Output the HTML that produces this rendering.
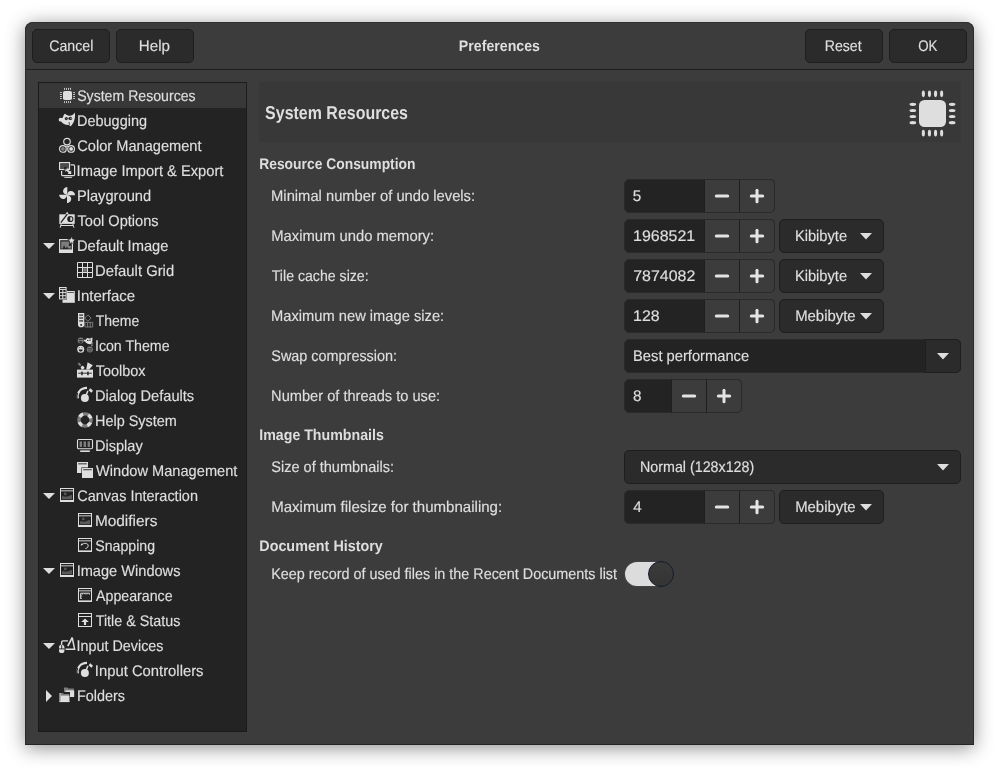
<!DOCTYPE html>
<html lang='en'><head><meta charset='utf-8'><title>Preferences</title>
<style>
html,body{margin:0;padding:0;background:#fff;}
body{width:999px;height:773px;position:relative;overflow:hidden;font-family:"Liberation Sans", sans-serif;color:#dedede;text-rendering:geometricPrecision;}
#root{position:absolute;left:0;top:0;width:999px;height:773px;will-change:transform;}
div,header,nav,main,section,ul,li,h1,h2,label,span,svg{position:absolute;box-sizing:border-box;margin:0;padding:0;}
ul{list-style:none;}
.t{white-space:nowrap;line-height:30px;height:30px;transform-origin:0 0;font-size:15.4px;font-weight:normal;-webkit-text-stroke:0.18px #dedede;}
.t.b{font-weight:bold;-webkit-text-stroke:0;}
.btn{background:#2b2b2b;border:1px solid #1e1e1e;border-radius:5px;}
.ent{background:#232323;border:1px solid #2a2a2a;border-radius:5px;}
.sb{background:#3c3c3c;border:1px solid #2a2a2a;border-left-color:#1f1f1f;width:36px;height:34px;top:0;}
.sb.last{border-radius:0 5px 5px 0;}
svg{overflow:visible}
#win{left:25px;top:22px;width:949px;height:723px;background:#3c3c3c;border-radius:8px 8px 0 0;box-shadow:0 3px 19px 0 rgba(0,0,0,0.44);}
#frame{left:0;top:0;width:949px;height:723px;border:1px solid #2b2b2b;border-top-color:#303030;border-bottom-color:#242424;border-radius:8px 8px 0 0;pointer-events:none;}
#side{left:13px;top:60px;width:209px;height:650px;background:#232323;border:1px solid #1b1b1b;}
#side li{left:0;width:207px;height:25px;}
#side li.sel{background:#383838;}
</style></head><body><div id='root'>
<div id='win'>
<header style='left:0;top:0;width:949px;height:48px;border-bottom:1px solid #1f1f1f;'>
<div class='btn' style='left:7px;top:7px;width:78px;height:34px'><span class='t' style='left:16px;top:2px;transform:translateX(0.23px) scaleX(0.9202);'>Cancel</span></div>
<div class='btn' style='left:91px;top:7px;width:78px;height:34px'><span class='t' style='left:21px;top:2px;transform:translateX(0.86px) scaleX(0.9836);'>Help</span></div>
<div class='btn' style='left:780px;top:7px;width:78px;height:34px'><span class='t' style='left:18px;top:2px;transform:translateX(0.70px) scaleX(0.9167);'>Reset</span></div>
<div class='btn' style='left:864px;top:7px;width:78px;height:34px'><span class='t' style='left:28px;top:2px;transform:translateX(0.21px) scaleX(0.8656);'>OK</span></div>
<h1 class='t b' style='left:433px;top:10px;transform:translateX(0.85px) scaleX(0.9199);'>Preferences</h1>
</header>
<nav id='side'><ul style='left:0;top:0;width:207px;height:648px'>
<li class='sel' style='top:0px'><svg style='left:20px;top:4px' width='17' height='17' viewBox='0 0 17 17'><g transform='translate(0.5 0.5) scale(0.33333)'><rect x="10.5" y="10.5" width="27" height="27" rx="5.5" fill="#dedede"/><ellipse cx="14.85" cy="4.35" rx="1.55" ry="3.3" fill="#dedede"/><ellipse cx="14.85" cy="43.65" rx="1.55" ry="3.3" fill="#dedede"/><ellipse cy="14.85" cx="4.35" ry="1.55" rx="3.3" fill="#dedede"/><ellipse cy="14.85" cx="43.65" ry="1.55" rx="3.3" fill="#dedede"/><ellipse cx="20.95" cy="4.35" rx="1.55" ry="3.3" fill="#dedede"/><ellipse cx="20.95" cy="43.65" rx="1.55" ry="3.3" fill="#dedede"/><ellipse cy="20.95" cx="4.35" ry="1.55" rx="3.3" fill="#dedede"/><ellipse cy="20.95" cx="43.65" ry="1.55" rx="3.3" fill="#dedede"/><ellipse cx="27.05" cy="4.35" rx="1.55" ry="3.3" fill="#dedede"/><ellipse cx="27.05" cy="43.65" rx="1.55" ry="3.3" fill="#dedede"/><ellipse cy="27.05" cx="4.35" ry="1.55" rx="3.3" fill="#dedede"/><ellipse cy="27.05" cx="43.65" ry="1.55" rx="3.3" fill="#dedede"/><ellipse cx="33.15" cy="4.35" rx="1.55" ry="3.3" fill="#dedede"/><ellipse cx="33.15" cy="43.65" rx="1.55" ry="3.3" fill="#dedede"/><ellipse cy="33.15" cx="4.35" ry="1.55" rx="3.3" fill="#dedede"/><ellipse cy="33.15" cx="43.65" ry="1.55" rx="3.3" fill="#dedede"/></g></svg><span class='t' style='left:38px;top:-1px;transform:translateX(0.16px) scaleX(0.9170);'>System Resources</span></li>
<li style='top:25px'><svg style='left:20px;top:4px' width='16' height='16' viewBox='0 0 16 16'><circle cx="1.6" cy="7.7" r="1.9" fill="#dedede"/><path d="M2.4 6 C3.4 6.3 3.9 5.4 4.2 4.4 C4.6 3 5.3 2 6.1 1.7 C7.2 2.6 8.6 3.5 10 3.7 C11.4 3.9 12.6 3.6 13.5 3 C14.6 2.3 15.4 1.5 15.8 0.6 C16.4 4 15.9 7 14.8 9.7 C14 11.5 12.8 13 11.8 14.2 L10.5 13.8 L10 12.9 C7.5 13.4 4.6 12.2 3 10.6 L2.2 9.4 Z" fill="#dedede"/><ellipse cx="7.3" cy="6.6" rx="1.55" ry="1.6" fill="#232323"/><ellipse cx="11.3" cy="6.4" rx="1.9" ry="1.7" fill="#232323"/><circle cx="12" cy="6.2" r="0.65" fill="#dedede"/><path d="M6.6 6.6 L7.4 7.4 L8.1 6.3 Z" fill="#dedede" opacity="0.55"/><path d="M9.5 10 L10.7 10.3 L10.8 13.4 L10 13 Z" fill="#232323" opacity="0.8"/></svg><span class='t' style='left:37px;top:-1px;transform:translateX(0.97px) scaleX(0.9406);'>Debugging</span></li>
<li style='top:50px'><svg style='left:20px;top:4px' width='16' height='16' viewBox='0 0 16 16'><circle cx="8" cy="4.6" r="3.3" fill="none" stroke="#dedede" stroke-width="1.15"/><circle cx="3.9" cy="11.9" r="3.35" fill="none" stroke="#dedede" stroke-width="1.15"/><circle cx="12.1" cy="11.9" r="3.35" fill="none" stroke="#dedede" stroke-width="1.15"/><circle cx="3.9" cy="11.9" r="1.9" fill="#7d7d7d"/><circle cx="12.1" cy="11.9" r="1.9" fill="#dedede"/><circle cx="8" cy="9.3" r="0.9" fill="#dedede"/></svg><span class='t' style='left:38px;top:-1px;transform:translateX(0.30px) scaleX(0.9486);'>Color Management</span></li>
<li style='top:75px'><svg style='left:20px;top:4px' width='16' height='16' viewBox='0 0 16 16'><path d="M11.6 2.8 h2.9 a1.1 1.1 0 0 1 1.1 1.1 v8.6 a1.1 1.1 0 0 1 -1.1 1.1 h-10.8 a1.1 1.1 0 0 1 -1.1 -1.1 v-3.6" fill="none" stroke="#dedede" stroke-width="1.2"/><rect x="0.55" y="0.55" width="10" height="7" fill="#4c4c4c" stroke="#dedede" stroke-width="1.1"/><rect x="5.4" y="14.9" width="7.5" height="0.95" fill="#dedede"/><path d="M6.3 6.4 L10 6.4 L8.9 7.5 L11 9.6 L12.2 8.4 L12.2 12 L8.6 12 L9.7 10.9 L7.6 8.8 L6.3 10 Z" fill="#dedede"/><rect x="5" y="5" width="2.6" height="2.6" fill="#232323" opacity="0.9"/></svg><span class='t' style='left:37px;top:-1px;transform:translateX(0.62px) scaleX(0.9531);'>Image Import &amp; Export</span></li>
<li style='top:100px'><svg style='left:20px;top:4px' width='16' height='16' viewBox='0 0 16 16'><path d="M8.3 8 L8.3 0 C5.6 0.2 3.6 2.6 4.2 5.1 C4.7 6.8 6.4 7.8 8.3 8 Z" fill="#dedede" transform="rotate(0 8.15 8)"/><path d="M8.3 8 L8.3 0 C5.6 0.2 3.6 2.6 4.2 5.1 C4.7 6.8 6.4 7.8 8.3 8 Z" fill="#dedede" transform="rotate(90 8.15 8)"/><path d="M8.3 8 L8.3 0 C5.6 0.2 3.6 2.6 4.2 5.1 C4.7 6.8 6.4 7.8 8.3 8 Z" fill="#dedede" transform="rotate(180 8.15 8)"/><path d="M8.3 8 L8.3 0 C5.6 0.2 3.6 2.6 4.2 5.1 C4.7 6.8 6.4 7.8 8.3 8 Z" fill="#dedede" transform="rotate(270 8.15 8)"/></svg><span class='t' style='left:37px;top:-1px;transform:translateX(0.89px) scaleX(0.9536);'>Playground</span></li>
<li style='top:125px'><svg style='left:20px;top:4px' width='16' height='16' viewBox='0 0 16 16'><rect x="0.3" y="2.3" width="15.4" height="9.6" fill="#dedede"/><path d="M6.3 2.4 L8.1 -0.3 L9.9 2.4 Z" fill="#dedede"/><path d="M2.2 12 L1.1 15.7 M13.8 12 L14.9 15.7 M1.8 13.5 H14.2" stroke="#dedede" stroke-width="1" fill="none"/><path d="M1.8 10.6 L8.3 2.2" stroke="#232323" stroke-width="1.3"/><circle cx="11.3" cy="7" r="3.1" fill="#232323"/><path d="M11.3 4.9 a2.1 2.1 0 0 1 0 4.2 Z" fill="#dedede"/></svg><span class='t' style='left:38px;top:-1px;transform:translateX(0.53px) scaleX(0.9473);'>Tool Options</span></li>
<li style='top:150px'><svg style='left:4px;top:10px' width='12' height='6' viewBox='0 0 12 6'><path d='M0 0 H12 L6 6 Z' fill='#dedede'/></svg><svg style='left:20px;top:4px' width='16' height='16' viewBox='0 0 16 16'><rect x="0.6" y="2.6" width="12.8" height="12.8" fill="none" stroke="#dedede" stroke-width="1.2"/><rect x="0.6" y="12.4" width="12.8" height="3" fill="#dedede"/><path d="M2.2 11.5 L2.2 4.5 L10 4.5 L10 9 L12 9 L12 11.5 L9 11.5 L8 9.5 L6.5 11.5 L5 8 L3.8 11.5 Z" fill="#7d7d7d"/><path d="M12.6 -0.6 L13.75 2.1 L16.5 2.4 L14.4 4.3 L15 7.1 L12.6 5.65 L10.2 7.1 L10.8 4.3 L8.7 2.4 L11.45 2.1 Z" fill="#dedede" stroke="#232323" stroke-width="0.7"/></svg><span class='t' style='left:37px;top:-1px;transform:translateX(0.89px) scaleX(0.9552);'>Default Image</span></li>
<li style='top:175px'><svg style='left:38px;top:4px' width='16' height='16' viewBox='0 0 16 16'><path d="M0.5 0.5 H15.5 V15.5 H0.5 Z M5.5 0.5 V15.5 M10.5 0.5 V15.5 M0.5 5.5 H15.5 M0.5 10.5 H15.5" fill="none" stroke="#dedede" stroke-width="1"/><rect x="6.2" y="6.2" width="3.6" height="3.6" fill="#7d7d7d"/></svg><span class='t' style='left:56px;top:-1px;transform:translateX(0.05px) scaleX(0.9633);'>Default Grid</span></li>
<li style='top:200px'><svg style='left:4px;top:10px' width='12' height='6' viewBox='0 0 12 6'><path d='M0 0 H12 L6 6 Z' fill='#dedede'/></svg><svg style='left:20px;top:4px' width='16' height='16' viewBox='0 0 16 16'><rect x="3.5" y="4" width="12.3" height="11.8" fill="#dedede"/><rect x="8.5" y="5.2" width="6.3" height="0.7" fill="#232323"/><rect x="-0.2" y="-0.2" width="8.2" height="12.9" fill="#232323"/><rect x="0.5" y="0.5" width="6.6" height="11.4" fill="none" stroke="#dedede" stroke-width="1"/><path d="M0.5 2.4 H7 M0.5 5.6 H7 M0.5 8.7 H7 M3.8 2.4 V12" stroke="#dedede" stroke-width="1" fill="none"/></svg><span class='t' style='left:37px;top:-1px;transform:translateX(0.82px) scaleX(0.9747);'>Interface</span></li>
<li style='top:225px'><svg style='left:38px;top:4px' width='16' height='16' viewBox='0 0 16 16'><path d="M10.9 2.9 L14 6.1 L10.9 9.3 L7.8 6.1 Z" fill="none" stroke="#7d7d7d" stroke-width="1"/><path d="M7.9 15 V10.4 H15.7 V15 Z M10.6 10.4 V15 M13.2 10.4 V15" fill="none" stroke="#7d7d7d" stroke-width="1"/><path d="M1 0.9 H7.3 V12.2 A3.15 3.15 0 0 1 1 12.2 Z" fill="#dedede"/><rect x="2.2" y="2.5" width="3.9" height="1.2" fill="#232323"/><rect x="2.2" y="5.4" width="3.9" height="1.2" fill="#232323"/><rect x="2.2" y="8.3" width="3.9" height="1.2" fill="#232323"/><rect x="3.3" y="12.1" width="1.7" height="1.6" fill="#232323"/></svg><span class='t' style='left:56px;top:-1px;transform:translateX(0.71px) scaleX(0.9091);'>Theme</span></li>
<li style='top:250px'><svg style='left:38px;top:4px' width='16' height='16' viewBox='0 0 16 16'><circle cx="3.7" cy="3.6" r="3" fill="#7d7d7d"/><rect x="1.7" y="2.2" width="4" height="0.8" fill="#232323"/><path d="M2 4.2 a1.7 1.7 0 0 0 3.4 0 Z" fill="#232323"/><circle cx="3.7" cy="12.2" r="3.5" fill="#dedede"/><path d="M1.6 12.6 a2.1 2.1 0 0 0 4.2 0 Z" fill="#232323"/><path d="M1.8 11 l1.2 -0.6 M5.6 11 l-1.2 -0.6" stroke="#232323" stroke-width="0.6"/><circle cx="12.8" cy="12.6" r="3" fill="#7d7d7d"/><rect x="10.6" y="11.4" width="4.4" height="0.9" fill="#232323"/><rect x="11" y="13.6" width="3.6" height="0.7" fill="#232323"/><path d="M7 3.8 C6.6 2.8 7.8 2.2 8.6 3 C9 1.8 9.8 1.2 10.5 1 C12 1.8 14 1.6 15.2 0.2 C15.8 2.6 15.4 5 14 6.6 L13.6 7.2 L11.2 7 C9.8 6.6 8.8 5.8 8.4 4.8 C7.8 4.9 7.2 4.5 7 3.8 Z" fill="#dedede"/><circle cx="10.8" cy="3.4" r="0.7" fill="#232323"/><circle cx="13" cy="3.3" r="0.7" fill="#232323"/><rect x="14.4" y="5" width="1" height="2.6" fill="#dedede"/><rect x="14.4" y="8.2" width="1" height="1" fill="#dedede"/></svg><span class='t' style='left:55px;top:-1px;transform:translateX(0.95px) scaleX(0.9211);'>Icon Theme</span></li>
<li style='top:275px'><svg style='left:38px;top:4px' width='16' height='16' viewBox='0 0 16 16'><rect x="0" y="7.6" width="16" height="8" fill="#dedede"/><path d="M1.2 11.2 H14.8" stroke="#232323" stroke-width="0.9"/><rect x="4.2" y="9.6" width="1.5" height="3.6" fill="#232323"/><rect x="10.2" y="9.6" width="1.5" height="3.6" fill="#232323"/><path d="M9.2 7.6 L10.6 0.2 L15.8 3.2 L12.2 7.6 Z" fill="#dedede"/><path d="M0.6 1.8 L2.2 0.6 L4.4 3 L3 4.2 Z" fill="#7d7d7d"/><path d="M3.6 5 L5.8 3.4 L7.6 5.8 L6.2 7.6 L4.6 7.6 Z" fill="#dedede"/></svg><span class='t' style='left:56px;top:-1px;transform:translateX(0.70px) scaleX(0.9397);'>Toolbox</span></li>
<li style='top:300px'><svg style='left:38px;top:4px' width='16' height='16' viewBox='0 0 16 16'><path d="M0.9 11.4 C-0.4 6 3.4 0.9 10 0.9" fill="none" stroke="#dedede" stroke-width="2.1" stroke-linecap="butt"/><path d="M0.2 12.6 C-0.6 10 -0.2 8 0.6 6" fill="none" stroke="#232323" stroke-width="1.1"/><rect x="12" y="2.2" width="3.6" height="2.6" fill="#dedede" transform="rotate(40 13.8 3.5)"/><circle cx="7.9" cy="10.9" r="4" fill="#dedede"/><path d="M8 10.6 L10.9 3.9" stroke="#dedede" stroke-width="1.4"/></svg><span class='t' style='left:55px;top:-1px;transform:translateX(0.96px) scaleX(0.9507);'>Dialog Defaults</span></li>
<li style='top:325px'><svg style='left:38px;top:4px' width='16' height='16' viewBox='0 0 16 16'><circle cx="8" cy="8" r="6.1" fill="none" stroke="#7d7d7d" stroke-width="3.4"/><circle cx="8" cy="8" r="6.1" fill="none" stroke="#dedede" stroke-width="3.4" stroke-dasharray="4.2 5.38" stroke-dashoffset="-2.7"/></svg><span class='t' style='left:56px;top:-1px;transform:translateX(0.01px) scaleX(0.9365);'>Help System</span></li>
<li style='top:350px'><svg style='left:38px;top:4px' width='16' height='16' viewBox='0 0 16 16'><rect x="0.5" y="2.5" width="15" height="9.3" rx="1.2" fill="none" stroke="#dedede" stroke-width="1.1"/><rect x="2.6" y="4.4" width="2.4" height="5.6" fill="#7d7d7d"/><rect x="6.6" y="4.4" width="2.4" height="5.6" fill="#7d7d7d"/><rect x="10.6" y="4.4" width="2.4" height="5.6" fill="#7d7d7d"/><rect x="3.2" y="13.4" width="9.6" height="1.6" fill="#dedede"/></svg><span class='t' style='left:55px;top:-1px;transform:translateX(0.97px) scaleX(0.9451);'>Display</span></li>
<li style='top:375px'><svg style='left:38px;top:4px' width='16' height='16' viewBox='0 0 16 16'><rect x="0" y="0" width="11" height="11" fill="#dedede"/><rect x="1.2" y="1.4" width="8.6" height="0.9" fill="#232323"/><rect x="4.4" y="5.4" width="12" height="11" fill="#232323"/><rect x="5" y="6" width="11" height="10" fill="#dedede"/><rect x="6.2" y="7.3" width="8.6" height="0.9" fill="#232323"/></svg><span class='t' style='left:57px;top:-1px;transform:translateX(0.01px) scaleX(0.9497);'>Window Management</span></li>
<li style='top:400px'><svg style='left:4px;top:10px' width='12' height='6' viewBox='0 0 12 6'><path d='M0 0 H12 L6 6 Z' fill='#dedede'/></svg><svg style='left:20px;top:4px' width='16' height='16' viewBox='0 0 16 16'><rect x="1.5" y="1.5" width="13" height="13" fill="none" stroke="#dedede" stroke-width="1"/><rect x="1" y="13.0" width="14" height="2.0" fill="#dedede"/><rect x="1" y="3.4" width="14" height="0.9" fill="#dedede"/><path d="M3 12.2 V9.4 C4.6 8.6 6 10 8 9.6 C10 9.2 11.4 7.8 13 8 V12.2 Z" fill="#595959"/><circle cx="6.3" cy="6.9" r="1.35" fill="#595959"/></svg><span class='t' style='left:38px;top:-1px;transform:translateX(0.33px) scaleX(0.9398);'>Canvas Interaction</span></li>
<li style='top:425px'><svg style='left:38px;top:4px' width='16' height='16' viewBox='0 0 16 16'><rect x="1.5" y="1.5" width="13" height="13" fill="none" stroke="#dedede" stroke-width="1"/><rect x="1" y="13.0" width="14" height="2.0" fill="#dedede"/><rect x="1" y="3.4" width="14" height="0.9" fill="#dedede"/><path d="M3 12.2 V9.4 C4.6 8.6 6 10 8 9.6 C10 9.2 11.4 7.8 13 8 V12.2 Z" fill="#595959"/><circle cx="6.3" cy="6.9" r="1.35" fill="#595959"/></svg><span class='t' style='left:55px;top:-1px;transform:translateX(0.92px) scaleX(0.9997);'>Modifiers</span></li>
<li style='top:450px'><svg style='left:38px;top:4px' width='16' height='16' viewBox='0 0 16 16'><rect x="1.5" y="1.5" width="13" height="13" fill="none" stroke="#dedede" stroke-width="1"/><rect x="1" y="13.4" width="14" height="1.6" fill="#dedede"/><rect x="1" y="3.4" width="14" height="0.9" fill="#dedede"/><path d="M4.4 7.8 C7 5.4 11.4 6.2 11.2 8.8 C11 10.4 9.8 11.2 8.4 11.6" fill="none" stroke="#dedede" stroke-width="1"/><path d="M3.6 8.8 L4.2 6.5 L6.3 7.5 Z" fill="#dedede"/></svg><span class='t' style='left:56px;top:-1px;transform:translateX(0.28px) scaleX(0.9184);'>Snapping</span></li>
<li style='top:475px'><svg style='left:4px;top:10px' width='12' height='6' viewBox='0 0 12 6'><path d='M0 0 H12 L6 6 Z' fill='#dedede'/></svg><svg style='left:20px;top:4px' width='16' height='16' viewBox='0 0 16 16'><rect x="1.5" y="1.5" width="13" height="13" fill="none" stroke="#dedede" stroke-width="1"/><rect x="1" y="13.0" width="14" height="2.0" fill="#dedede"/><rect x="1" y="3.4" width="14" height="0.9" fill="#dedede"/><path d="M3 12.2 V9.4 C4.6 8.6 6 10 8 9.6 C10 9.2 11.4 7.8 13 8 V12.2 Z" fill="#595959"/><circle cx="6.3" cy="6.9" r="1.35" fill="#595959"/></svg><span class='t' style='left:37px;top:-1px;transform:translateX(0.65px) scaleX(0.9481);'>Image Windows</span></li>
<li style='top:500px'><svg style='left:38px;top:4px' width='16' height='16' viewBox='0 0 16 16'><rect x="1.5" y="1.5" width="13" height="13" fill="none" stroke="#dedede" stroke-width="1"/><rect x="1" y="13.4" width="14" height="1.6" fill="#dedede"/><rect x="1" y="3.4" width="14" height="0.9" fill="#dedede"/><path d="M3.6 11.8 V6.2 H12.8 M5.4 6.2 V7.5 M7.2 6.2 V7.2 M9 6.2 V7.5 M10.8 6.2 V7.2 M12.5 6.2 V7.5 M3.6 8.1 H4.9 M3.6 9.8 H4.7 M3.6 11.4 H4.9" fill="none" stroke="#dedede" stroke-width="0.9"/></svg><span class='t' style='left:57px;top:-1px;transform:translateX(0.07px) scaleX(0.9215);'>Appearance</span></li>
<li style='top:525px'><svg style='left:38px;top:4px' width='16' height='16' viewBox='0 0 16 16'><rect x="1.5" y="1.5" width="13" height="13" fill="none" stroke="#dedede" stroke-width="1"/><rect x="1" y="4" width="14" height="1" fill="#dedede"/><path d="M8 6.6 L11.8 10 H9.1 V13 H6.9 V10 H4.2 Z" fill="#dedede"/></svg><span class='t' style='left:56px;top:-1px;transform:translateX(0.71px) scaleX(0.9316);'>Title &amp; Status</span></li>
<li style='top:550px'><svg style='left:4px;top:10px' width='12' height='6' viewBox='0 0 12 6'><path d='M0 0 H12 L6 6 Z' fill='#dedede'/></svg><svg style='left:20px;top:4px' width='16' height='16' viewBox='0 0 16 16'><path d="M2.6 8 V5.4 Q2.6 3.9 4.1 3.9 H9" fill="none" stroke="#dedede" stroke-width="1.4"/><path d="M13.3 1 L15.6 12.2 H6.6" fill="none" stroke="#dedede" stroke-width="1.5" stroke-linejoin="miter"/><path d="M13.4 0.4 L8.8 9.2" stroke="#dedede" stroke-width="1.7"/><rect x="0" y="7.8" width="5.4" height="8.3" rx="2.6" fill="#dedede"/><path d="M0 11.9 H5.4 M2.7 7.8 V11.9" stroke="#232323" stroke-width="0.9"/></svg><span class='t' style='left:37px;top:-1px;transform:translateX(0.62px) scaleX(0.9317);'>Input Devices</span></li>
<li style='top:575px'><svg style='left:38px;top:4px' width='16' height='16' viewBox='0 0 16 16'><path d="M0.9 11.4 C-0.4 6 3.4 0.9 10 0.9" fill="none" stroke="#dedede" stroke-width="2.1" stroke-linecap="butt"/><path d="M0.2 12.6 C-0.6 10 -0.2 8 0.6 6" fill="none" stroke="#232323" stroke-width="1.1"/><rect x="12" y="2.2" width="3.6" height="2.6" fill="#dedede" transform="rotate(40 13.8 3.5)"/><circle cx="7.9" cy="10.9" r="4" fill="#dedede"/><path d="M8 10.6 L10.9 3.9" stroke="#dedede" stroke-width="1.4"/></svg><span class='t' style='left:55px;top:-1px;transform:translateX(0.87px) scaleX(0.9620);'>Input Controllers</span></li>
<li style='top:600px'><svg style='left:7px;top:7px' width='6' height='12' viewBox='0 0 6 12'><path d='M0 0 V12 L6 6 Z' fill='#dedede'/></svg><svg style='left:20px;top:4px' width='16' height='16' viewBox='0 0 16 16'><path d="M5 0.6 H8.4 L9.2 1.6 H14.8 V9.8 H5 Z" fill="#7d7d7d"/><rect x="6.6" y="3.4" width="8.6" height="6.6" fill="#dedede"/><path d="M-0.2 5 H11 V15.8 H-0.2 Z" fill="#232323"/><path d="M0.6 6 H4 L4.8 7 H10.2 V15 H0.6 Z" fill="#7d7d7d"/><rect x="1.8" y="8.6" width="8.6" height="6.4" fill="#dedede"/><rect x="0.6" y="6" width="0.9" height="9" fill="#dedede"/><rect x="0.6" y="14.2" width="9.8" height="0.9" fill="#dedede"/></svg><span class='t' style='left:37px;top:-1px;transform:translateX(0.97px) scaleX(0.9366);'>Folders</span></li>
</ul></nav>
<main style='left:0;top:0;width:0;height:0'>
<div style='left:234px;top:60px;width:702px;height:60px;background:#383838;border-radius:3px'><h2 class='t b' style='left:6px;top:16px;transform:translateX(0.12px) scaleX(0.8586);font-size:18.6px;'>System Resources</h2><svg style='left:649px;top:7px' width='49' height='49' viewBox='0 0 49 49'><g transform='translate(0.5 0.5)'><rect x="10.5" y="10.5" width="27" height="27" rx="5.5" fill="#dedede"/><ellipse cx="14.85" cy="4.35" rx="1.55" ry="3.3" fill="#dedede"/><ellipse cx="14.85" cy="43.65" rx="1.55" ry="3.3" fill="#dedede"/><ellipse cy="14.85" cx="4.35" ry="1.55" rx="3.3" fill="#dedede"/><ellipse cy="14.85" cx="43.65" ry="1.55" rx="3.3" fill="#dedede"/><ellipse cx="20.95" cy="4.35" rx="1.55" ry="3.3" fill="#dedede"/><ellipse cx="20.95" cy="43.65" rx="1.55" ry="3.3" fill="#dedede"/><ellipse cy="20.95" cx="4.35" ry="1.55" rx="3.3" fill="#dedede"/><ellipse cy="20.95" cx="43.65" ry="1.55" rx="3.3" fill="#dedede"/><ellipse cx="27.05" cy="4.35" rx="1.55" ry="3.3" fill="#dedede"/><ellipse cx="27.05" cy="43.65" rx="1.55" ry="3.3" fill="#dedede"/><ellipse cy="27.05" cx="4.35" ry="1.55" rx="3.3" fill="#dedede"/><ellipse cy="27.05" cx="43.65" ry="1.55" rx="3.3" fill="#dedede"/><ellipse cx="33.15" cy="4.35" rx="1.55" ry="3.3" fill="#dedede"/><ellipse cx="33.15" cy="43.65" rx="1.55" ry="3.3" fill="#dedede"/><ellipse cy="33.15" cx="4.35" ry="1.55" rx="3.3" fill="#dedede"/><ellipse cy="33.15" cx="43.65" ry="1.55" rx="3.3" fill="#dedede"/></g></svg></div>
<section style='left:0;top:0;width:0;height:0'>
<h2 class='t b' style='left:234px;top:128px;transform:translateX(0.20px) scaleX(0.9005);'>Resource Consumption</h2>
<label class='t' style='left:246px;top:160px;transform:translateX(0.08px) scaleX(0.9577);'>Minimal number of undo levels:</label>
<div class='spin' style='left:599px;top:157px;width:151px;height:34px'><div class='ent' style='left:0;top:0;width:151px;height:34px'></div><span class='t' style='left:8px;top:3px;transform:translateX(0.67px) scaleX(0.9908);'>5</span><div class='sb' style='left:80px;border-right:none'><svg style='left:9px;top:8px' width='16' height='16' viewBox='0 0 16 16'><rect x='0.8' y='6.5' width='14.4' height='3' rx='1.5' fill='#e4e4e4'/></svg></div><div class='sb last' style='left:115px'><svg style='left:9px;top:8px' width='16' height='16' viewBox='0 0 16 16'><rect x='0.8' y='6.5' width='14.4' height='3' rx='1.5' fill='#e4e4e4'/><rect x='6.5' y='0.8' width='3' height='14.4' rx='1.5' fill='#e4e4e4'/></svg></div></div>
<label class='t' style='left:246px;top:200px;transform:translateX(0.19px) scaleX(0.9621);'>Maximum undo memory:</label>
<div class='spin' style='left:599px;top:197px;width:151px;height:34px'><div class='ent' style='left:0;top:0;width:151px;height:34px'></div><span class='t' style='left:9px;top:3px;transform:translateX(0.11px) scaleX(1.0361);'>1968521</span><div class='sb' style='left:80px;border-right:none'><svg style='left:9px;top:8px' width='16' height='16' viewBox='0 0 16 16'><rect x='0.8' y='6.5' width='14.4' height='3' rx='1.5' fill='#e4e4e4'/></svg></div><div class='sb last' style='left:115px'><svg style='left:9px;top:8px' width='16' height='16' viewBox='0 0 16 16'><rect x='0.8' y='6.5' width='14.4' height='3' rx='1.5' fill='#e4e4e4'/><rect x='6.5' y='0.8' width='3' height='14.4' rx='1.5' fill='#e4e4e4'/></svg></div></div>
<div class='btn' style='left:754px;top:197px;width:105px;height:34px'><span class='t' style='left:14px;top:2px;transform:translateX(0.89px) scaleX(0.9531);'>Kibibyte</span><svg style='left:80px;top:13px' width='12' height='6.5' viewBox='0 0 12 6.5'><path d='M0 0 H12 L6 6.5 Z' fill='#dedede'/></svg></div>
<label class='t' style='left:246px;top:240px;transform:translateX(0.74px) scaleX(0.9185);'>Tile cache size:</label>
<div class='spin' style='left:599px;top:237px;width:151px;height:34px'><div class='ent' style='left:0;top:0;width:151px;height:34px'></div><span class='t' style='left:9px;top:3px;transform:translateX(0.19px) scaleX(1.0370);'>7874082</span><div class='sb' style='left:80px;border-right:none'><svg style='left:9px;top:8px' width='16' height='16' viewBox='0 0 16 16'><rect x='0.8' y='6.5' width='14.4' height='3' rx='1.5' fill='#e4e4e4'/></svg></div><div class='sb last' style='left:115px'><svg style='left:9px;top:8px' width='16' height='16' viewBox='0 0 16 16'><rect x='0.8' y='6.5' width='14.4' height='3' rx='1.5' fill='#e4e4e4'/><rect x='6.5' y='0.8' width='3' height='14.4' rx='1.5' fill='#e4e4e4'/></svg></div></div>
<div class='btn' style='left:754px;top:237px;width:105px;height:34px'><span class='t' style='left:14px;top:2px;transform:translateX(0.89px) scaleX(0.9531);'>Kibibyte</span><svg style='left:80px;top:13px' width='12' height='6.5' viewBox='0 0 12 6.5'><path d='M0 0 H12 L6 6.5 Z' fill='#dedede'/></svg></div>
<label class='t' style='left:246px;top:280px;transform:translateX(0.07px) scaleX(0.9545);'>Maximum new image size:</label>
<div class='spin' style='left:599px;top:277px;width:151px;height:34px'><div class='ent' style='left:0;top:0;width:151px;height:34px'></div><span class='t' style='left:9px;top:3px;transform:translateX(0.11px) scaleX(1.0338);'>128</span><div class='sb' style='left:80px;border-right:none'><svg style='left:9px;top:8px' width='16' height='16' viewBox='0 0 16 16'><rect x='0.8' y='6.5' width='14.4' height='3' rx='1.5' fill='#e4e4e4'/></svg></div><div class='sb last' style='left:115px'><svg style='left:9px;top:8px' width='16' height='16' viewBox='0 0 16 16'><rect x='0.8' y='6.5' width='14.4' height='3' rx='1.5' fill='#e4e4e4'/><rect x='6.5' y='0.8' width='3' height='14.4' rx='1.5' fill='#e4e4e4'/></svg></div></div>
<div class='btn' style='left:754px;top:277px;width:105px;height:34px'><span class='t' style='left:15px;top:2px;transform:translateX(0.14px) scaleX(0.9690);'>Mebibyte</span><svg style='left:80px;top:13px' width='12' height='6.5' viewBox='0 0 12 6.5'><path d='M0 0 H12 L6 6.5 Z' fill='#dedede'/></svg></div>
<label class='t' style='left:246px;top:320px;transform:translateX(0.30px) scaleX(0.9363);'>Swap compression:</label>
<div class='combo' style='left:599px;top:317px;width:337px;height:34px'><div class='ent' style='left:0;top:0;width:337px;height:34px'></div><span class='t' style='left:9px;top:3px;transform:translateX(0.07px) scaleX(0.9550);'>Best performance</span><div class='btn' style='left:301px;top:0;width:36px;height:34px;border-radius:0 5px 5px 0'><svg style='left:11px;top:13px' width='12' height='6.5' viewBox='0 0 12 6.5'><path d='M0 0 H12 L6 6.5 Z' fill='#dedede'/></svg></div></div>
<label class='t' style='left:246px;top:360px;transform:translateX(0.11px) scaleX(0.9497);'>Number of threads to use:</label>
<div class='spin' style='left:599px;top:357px;width:118px;height:34px'><div class='ent' style='left:0;top:0;width:118px;height:34px'></div><span class='t' style='left:8px;top:3px;transform:translateX(1.00px) scaleX(0.9908);'>8</span><div class='sb' style='left:47px;border-right:none'><svg style='left:9px;top:8px' width='16' height='16' viewBox='0 0 16 16'><rect x='0.8' y='6.5' width='14.4' height='3' rx='1.5' fill='#e4e4e4'/></svg></div><div class='sb last' style='left:82px'><svg style='left:9px;top:8px' width='16' height='16' viewBox='0 0 16 16'><rect x='0.8' y='6.5' width='14.4' height='3' rx='1.5' fill='#e4e4e4'/><rect x='6.5' y='0.8' width='3' height='14.4' rx='1.5' fill='#e4e4e4'/></svg></div></div>
</section>
<section style='left:0;top:0;width:0;height:0'>
<h2 class='t b' style='left:234px;top:399px;transform:translateX(0.28px) scaleX(0.9214);'>Image Thumbnails</h2>
<label class='t' style='left:246px;top:431px;transform:translateX(0.26px) scaleX(0.9438);'>Size of thumbnails:</label>
<div class='btn' style='left:599px;top:428px;width:337px;height:34px'><span class='t' style='left:15px;top:2px;transform:translateX(0.03px) scaleX(0.9271);'>Normal (128x128)</span><svg style='left:312px;top:13px' width='12' height='6.5' viewBox='0 0 12 6.5'><path d='M0 0 H12 L6 6.5 Z' fill='#dedede'/></svg></div>
<label class='t' style='left:246px;top:471px;transform:translateX(0.13px) scaleX(0.9787);'>Maximum filesize for thumbnailing:</label>
<div class='spin' style='left:599px;top:468px;width:151px;height:34px'><div class='ent' style='left:0;top:0;width:151px;height:34px'></div><span class='t' style='left:9px;top:3px;transform:translateX(0.14px) scaleX(0.9908);'>4</span><div class='sb' style='left:80px;border-right:none'><svg style='left:9px;top:8px' width='16' height='16' viewBox='0 0 16 16'><rect x='0.8' y='6.5' width='14.4' height='3' rx='1.5' fill='#e4e4e4'/></svg></div><div class='sb last' style='left:115px'><svg style='left:9px;top:8px' width='16' height='16' viewBox='0 0 16 16'><rect x='0.8' y='6.5' width='14.4' height='3' rx='1.5' fill='#e4e4e4'/><rect x='6.5' y='0.8' width='3' height='14.4' rx='1.5' fill='#e4e4e4'/></svg></div></div>
<div class='btn' style='left:754px;top:468px;width:105px;height:34px'><span class='t' style='left:15px;top:2px;transform:translateX(0.14px) scaleX(0.9690);'>Mebibyte</span><svg style='left:80px;top:13px' width='12' height='6.5' viewBox='0 0 12 6.5'><path d='M0 0 H12 L6 6.5 Z' fill='#dedede'/></svg></div>
</section>
<section style='left:0;top:0;width:0;height:0'>
<h2 class='t b' style='left:234px;top:510px;transform:translateX(0.27px) scaleX(0.9319);'>Document History</h2>
<label class='t' style='left:246px;top:538px;transform:translateX(0.19px) scaleX(0.9337);'>Keep record of used files in the Recent Documents list</label>
<div class='switch' style='left:599px;top:539px;width:50px;height:26px;border-radius:13px;background:#dcdcdc;border:1px solid rgba(30,30,30,0.8)'><div style='left:23px;top:-1px;width:26px;height:26px;border-radius:13px;background:linear-gradient(#3b3b3b,#343434);border:1px solid #101a2a'></div></div>
</section>
</main>
<div id='frame'></div>
</div>
</div></body></html>
